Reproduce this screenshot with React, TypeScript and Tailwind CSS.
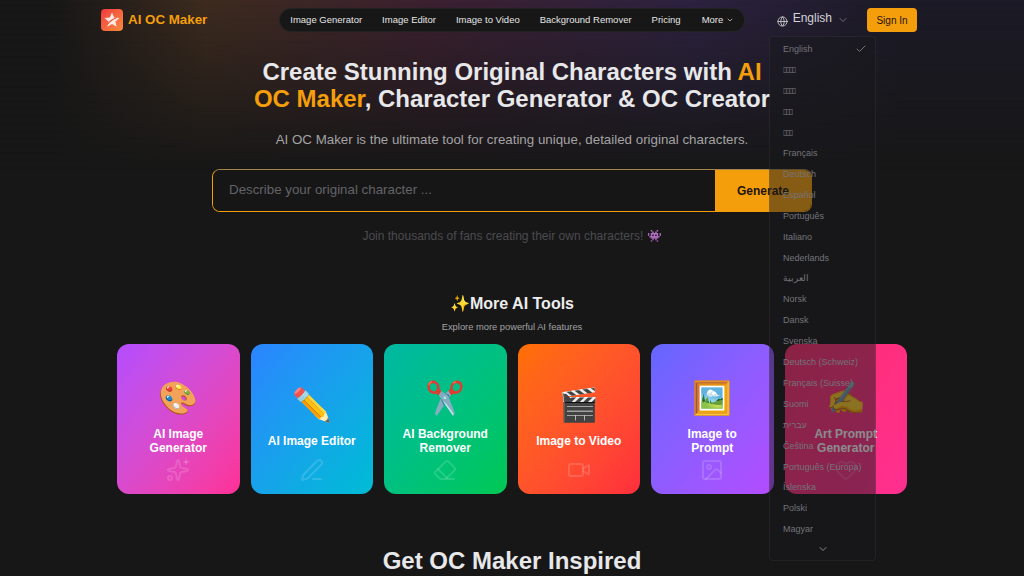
import { ChevronDown, Check, Globe, Sparkles, PenLine, Eraser, Video, Image as ImageIcon, Heart } from "lucide-react";

const navLinks = ["Image Generator", "Image Editor", "Image to Video", "Background Remover", "Pricing"];

const languages = [
  "English", "▯▯▯▯", "▯▯▯▯", "▯▯▯", "▯▯▯", "Français", "Deutsch", "Español", "Português", "Italiano",
  "Nederlands", "العربية", "Norsk", "Dansk", "Svenska", "Deutsch (Schweiz)", "Français (Suisse)", "Suomi",
  "עברית", "Čeština", "Português (Europa)", "Íslenska", "Polski", "Magyar",
];

const tools = [
  { emoji: "🎨", label: "AI Image Generator", gradient: "bg-gradient-to-br from-[#b44cff] to-[#ff2f96]", Icon: Sparkles },
  { emoji: "✏️", label: "AI Image Editor", gradient: "bg-gradient-to-br from-[#2b84ff] to-[#00bcd4]", Icon: PenLine },
  { emoji: "✂️", label: "AI Background Remover", gradient: "bg-gradient-to-br from-[#00b8a3] to-[#00c853]", Icon: Eraser },
  { emoji: "🎬", label: "Image to Video", gradient: "bg-gradient-to-br from-[#ff6f00] to-[#ff2d3c]", Icon: Video },
  { emoji: "🖼️", label: "Image to Prompt", gradient: "bg-gradient-to-br from-[#6366ff] to-[#b44cff]", Icon: ImageIcon },
  { emoji: "✍️", label: "Art Prompt Generator", gradient: "bg-gradient-to-br from-[#ff2d6e] to-[#ff2f90]", Icon: Heart },
];

function Logo() {
  return (
    <div className="flex h-[22px] w-[22px] items-center justify-center rounded bg-gradient-to-br from-[#f0343f] to-[#f98a3c]">
      <svg viewBox="0 0 24 24" className="h-[18px] w-[18px]" fill="#ffe9e0">
        <path d="M12 2l2.9 6.6 7.1.7-5.4 4.7 1.6 7-6.2-3.7L5.8 21l1.6-7L2 9.3l7.1-.7z" />
        <path d="M6 18C9 13 13 11 18 9" fill="none" stroke="#ef4a3c" strokeWidth="1.6" />
      </svg>
    </div>
  );
}

function LanguageMenu() {
  return (
    <div className="absolute left-[769px] top-[36px] z-20 h-[525px] w-[107px] rounded border border-white/5 bg-[#18181c]/50 px-[13px] pt-[2px]">
      {languages.map((lang, i) => (
        <div key={i} className="flex h-[20.9px] items-center justify-between text-[9px] text-[#747479]">
          {lang.startsWith("▯") ? (
            <span className="font-['DejaVu_Sans'] text-[8px] tracking-[-1.4px]">{lang}</span>
          ) : (
            <span>{lang}</span>
          )}
          {i === 0 && <Check className="-mr-[5px] h-3 w-3" />}
        </div>
      ))}
      <div className="mt-[3px] flex justify-center">
        <ChevronDown className="h-3 w-3 text-[#8a8a8f]" />
      </div>
    </div>
  );
}

export default function App() {
  return (
    <div className="relative h-[576px] overflow-hidden bg-[#171717] font-['Liberation_Sans',sans-serif] text-white">
      <div className="absolute inset-x-0 top-0 h-[170px] bg-[linear-gradient(90deg,#171717_5%,#3d2b1e_20%,#3c2030_42%,#2c2240_68%,#1c1a26_88%)] [mask-image:linear-gradient(to_bottom,black,transparent)]" />

      <div className="relative flex flex-col items-center">
        <header className="mr-[6px] flex h-[40px] w-[816px] items-center">
          <div className="flex items-center gap-[5px]">
            <Logo />
            <span className="text-[13.33px] font-bold text-[#f59e0b]">AI OC Maker</span>
          </div>
          <nav className="ml-[72px] flex h-6 items-center gap-[20px] rounded-full border border-white/5 bg-[#171717] px-[10px] text-[9.5px] text-[#e5e5e5]">
            {navLinks.map((link) => (
              <span key={link}>{link}</span>
            ))}
            <span className="ml-[1px] flex items-center gap-[3px]">
              More <ChevronDown className="h-2 w-2" />
            </span>
          </nav>
          <div className="ml-auto flex items-center">
            <Globe className="mt-[3px] h-[11px] w-[11px] text-[#c4c4c8]" />
            <span className="mb-[4px] ml-[5px] text-xs text-[#d4d4d8]">English</span>
            <ChevronDown className="ml-[5px] h-3 w-3 text-[#6b6b78]" />
            <button className="ml-[18px] h-6 w-[50px] rounded-sm bg-[#f59e0b] text-[10px] font-medium text-[#1c1408]">
              Sign In
            </button>
          </div>
        </header>

        <h1 className="mt-[18px] w-[540px] text-center text-2xl leading-[27px] font-bold text-[#e8e8ea]">
          Create Stunning Original Characters with <span className="text-[#f59e0b]">AI OC Maker</span>, Character
          Generator &amp; OC Creator
        </h1>
        <p className="mt-[18px] text-[13.33px] leading-5 text-[#a3a3a3]">
          AI OC Maker is the ultimate tool for creating unique, detailed original characters.
        </p>

        <div className="mt-[19px] flex h-[43px] w-[600px] overflow-hidden rounded-lg border border-[#f59e0b] border-t-[#a3854a]">
          <div className="flex flex-1 items-center bg-[#161616] pb-[2px] pl-4 text-[13.33px] text-[#636368]">
            Describe your original character ...
          </div>
          <button className="w-[96px] bg-[#f59e0b] text-xs font-bold text-[#1c1408]">Generate</button>
        </div>

        <p className="mt-[16px] text-xs leading-4 text-[#4b4b50]">Join thousands of fans creating their own characters! 👾</p>

        <h2 className="mt-[48px] text-base leading-6 font-bold text-[#ededed]">✨More AI Tools</h2>
        <p className="mt-[4px] text-[9.33px] leading-[14px] text-[#a3a3a3]">Explore more powerful AI features</p>

        <div className="mt-[10px] grid w-[790px] grid-cols-6 gap-[11px]">
          {tools.map(({ emoji, label, gradient, Icon }) => (
            <div key={label} className={`relative flex h-[150px] flex-col items-center justify-center rounded-xl px-4 pb-2 ${gradient}`}>
              <span className="text-[32px] leading-[44px]">{emoji}</span>
              <span className="mt-[7px] text-center text-xs leading-[14px] font-bold">{label}</span>
              <Icon className="absolute bottom-[12px] left-1/2 h-6 w-6 -translate-x-1/2 text-white/15" />
            </div>
          ))}
        </div>

        <h2 className="mt-[51px] text-2xl leading-8 font-bold text-[#e8e8ea]">Get OC Maker Inspired</h2>
      </div>

      <LanguageMenu />
    </div>
  );
}
